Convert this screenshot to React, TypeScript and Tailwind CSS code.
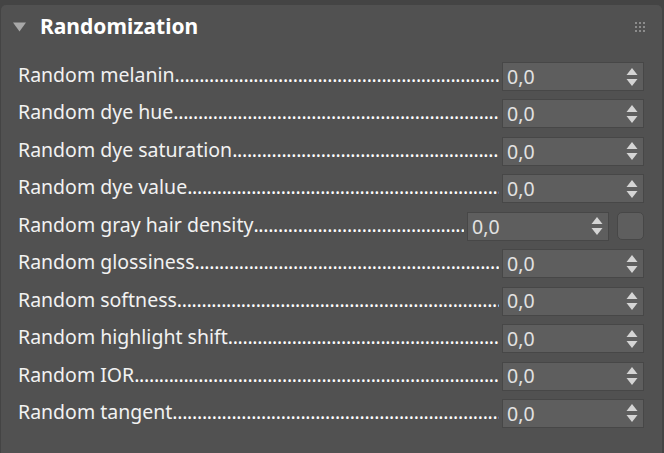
import { FC } from 'react';

const rows = [
  { label: 'Random melanin' },
  { label: 'Random dye hue' },
  { label: 'Random dye saturation' },
  { label: 'Random dye value' },
  { label: 'Random gray hair density', toggle: true },
  { label: 'Random glossiness' },
  { label: 'Random softness' },
  { label: 'Random highlight shift' },
  { label: 'Random IOR' },
  { label: 'Random tangent' }
];

const Spinner: FC<{ value: string }> = ({ value }) => (
  <div className="flex h-[29px] w-[142px] shrink-0 items-center justify-between border border-[#474747] bg-[#5e5e5e] pl-[4px] pr-[5px]">
    <span className="text-[19.5px] leading-none text-[#e2e2e2]">{value}</span>
    <svg width="12" height="20" viewBox="0 0 12 20" className="text-[#d4d4d4]">
      <polygon points="6,1 11.5,8 0.5,8" fill="currentColor" />
      <polygon points="0.5,12 11.5,12 6,19" fill="currentColor" />
    </svg>
  </div>
);

const Row: FC<{ label: string; toggle?: boolean }> = ({ label, toggle }) => (
  <div className="flex h-[29px] items-center">
    <div className="flex min-w-0 flex-1 items-center overflow-hidden whitespace-nowrap pr-[3px] text-[19.5px] leading-[29px] text-[#f2f2f2]">
      <span className="shrink-0 -translate-y-[2px]">{label}</span>
      <span className="min-w-0 flex-1 -translate-y-[2px] overflow-hidden tracking-[-0.3px] text-white">
        {'.'.repeat(120)}
      </span>
    </div>
    <Spinner value="0,0" />
    {toggle && (
      <div className="ml-[8px] h-[28px] w-[27px] shrink-0 rounded-[5px] border border-[#474747] bg-[#5e5e5e]" />
    )}
  </div>
);

const GripIcon: FC = () => (
  <svg width="10" height="10" viewBox="0 0 10 10" className="text-[#8c8c8c]">
    {[0, 1, 2].map((r) =>
      [0, 1, 2].map((c) => (
        <rect key={`${r}-${c}`} x={c * 4} y={r * 4} width="2" height="2" fill="currentColor" />
      ))
    )}
  </svg>
);

const App: FC = () => {
  return (
    <div
      className="h-[453px] w-[664px] overflow-hidden bg-[#444444] pt-[5px] pl-[1px] pr-[2px]"
      style={{ fontFamily: '"Noto Sans", "Open Sans", sans-serif' }}
    >
      <div className="h-full rounded-t-[5px] bg-[#515151]">
        <div className="flex h-[43px] items-center pl-[12px] pr-[17px]">
          <svg width="13" height="10" viewBox="0 0 13 10" className="text-[#a8a8a8]">
            <polygon points="0,0.5 13,0.5 6.5,9.5" fill="currentColor" />
          </svg>
          <span className="ml-[14px] text-[21px] font-bold text-white">Randomization</span>
          <div className="flex-1" />
          <GripIcon />
        </div>
        <div className="mt-[14px] flex flex-col gap-[8.45px] pl-[17px] pr-[18px]">
          {rows.map((r) => (
            <Row key={r.label} label={r.label} toggle={r.toggle} />
          ))}
        </div>
      </div>
    </div>
  );
};

export default App;
